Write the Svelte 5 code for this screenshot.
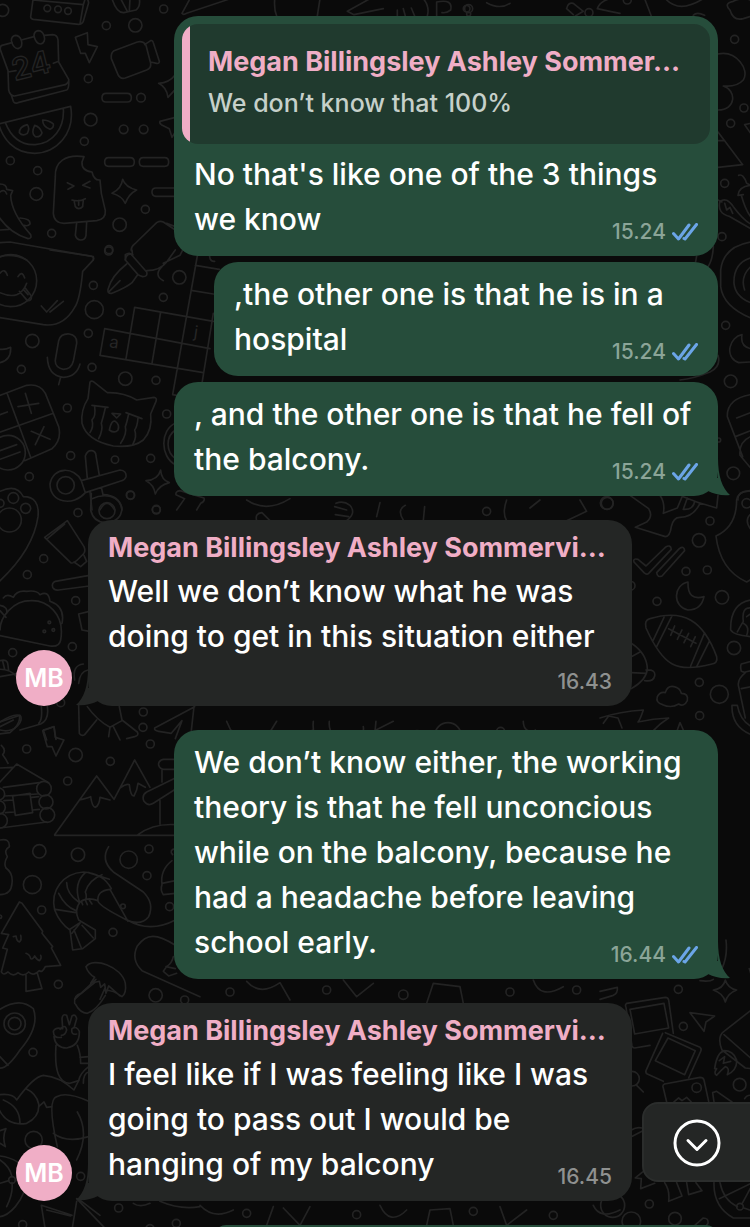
<script>
  const messages = [
    {
      mine: true,
      time: '15.24',
      quote: { name: 'Megan Billingsley Ashley Sommer…', text: 'We don’t know that 100%' },
      text: "No that's like one of the 3 things\nwe know",
    },
    { mine: true, narrow: true, time: '15.24', text: ',the other one is that he is in a\nhospital' },
    { mine: true, tail: true, time: '15.24', text: ', and the other one is that he fell of\nthe balcony.' },
    {
      author: 'Megan Billingsley Ashley Sommervi…',
      tail: true,
      stacked: true,
      time: '16.43',
      text: 'Well we don’t know what he was\ndoing to get in this situation either',
    },
    {
      mine: true,
      tail: true,
      time: '16.44',
      text: 'We don’t know either, the working\ntheory is that he fell unconcious\nwhile on the balcony, because he\nhad a headache before leaving\nschool early.',
    },
    {
      author: 'Megan Billingsley Ashley Sommervi…',
      tail: true,
      time: '16.45',
      text: 'I feel like if I was feeling like I was\ngoing to pass out I would be\nhanging of my balcony',
    },
  ];

  // Wallpaper doodles, drawn at three times their size and placed by region.
  const doodles = [
    {
      x: 0,
      y: 0,
      dots: [
        [8, 31, 18], [142, 25, 10], [174, 28, 10], [204, 33, 10], [319, 77, 12], [406, 76, 20], [491, 27, 12],
        [265, 236, 12], [423, 293, 13], [272, 359, 19], [371, 388, 13], [431, 388, 13], [253, 424, 12], [31, 482, 12],
        [113, 512, 12], [109, 582, 19], [436, 628, 12], [359, 674, 20], [155, 700, 12], [327, 749, 12],
      ],
      paths: [
        'M100 -8 92 50Q92 56 100 58L236 73Q246 73 250 64L266 8 262 -6M98 0 250 14 256 -5M250 14 240 72',
        'M336 -4Q350 40 372 38L408 30Q422 20 418 -4M362 -4 382 34M390 -4 388 32',
        'M6 136Q-2 140 2 152L24 212 26 270Q30 288 44 288L196 254Q208 248 206 238L176 186 174 120Q172 104 158 104L134 106M102 110 64 120M36 128 6 136M24 216 48 212M160 190 176 184M34 286 40 304Q44 312 54 308L200 270Q208 266 206 238',
        'M34 122Q34 108 46 106Q58 106 64 120Q70 142 54 146Q40 146 34 122ZM102 108Q102 94 114 92Q126 92 132 106Q138 128 122 132Q108 132 102 108Z',
        'M226 112 262 98 264 134 292 140 268 188 256 160 242 160Z',
        'M342 152 412 126Q430 122 438 136L452 190Q454 204 440 210L376 234Q360 238 354 224L334 176Q332 158 342 152ZM434 134 452 122Q458 120 460 128L478 184Q478 192 470 190L452 186',
        'M318 280H382Q394 280 394 293T382 306H318Q306 306 306 293T318 280ZM326 473H390Q403 473 403 486T390 499H326Q314 499 314 486T326 473ZM430 473H494Q506 473 506 486T494 499H430Q418 499 418 486T430 473ZM540 564H468Q456 564 456 576T468 589H540',
        'M-4 372 212 319C226 400 170 458 104 460C40 460 8 414 -4 372ZM16 368C34 414 64 436 106 434C160 430 194 384 190 324',
        'M82 374Q58 380 58 398Q68 410 82 400Q90 384 82 374ZM104 376Q92 400 106 410Q122 412 126 398Q120 380 104 376ZM128 360Q128 380 150 388Q162 384 160 372Q146 360 128 360Z',
        'M252 470C196 462 164 486 166 530L160 640Q162 670 192 670L290 662Q318 658 316 632L304 580 300 540Q282 542 276 516Q244 512 246 486Z',
        'M202 548 222 558 204 568M270 544 248 556 270 564M216 600Q238 606 256 596M222 602 226 620Q236 632 248 620L250 600M236 602V616M230 668 226 706Q230 720 242 720Q256 720 258 706L260 666',
        'M368 538Q376 562 410 570Q386 582 376 610Q366 588 336 580Q364 566 368 538Z',
        'M526 224Q508 248 476 250Q500 262 504 292L526 268M526 352 480 364Q478 370 484 374L508 386 516 412 526 396',
        'M0 552Q20 552 20 568L38 572 32 586Q34 640 92 704Q96 716 84 716Q30 700 -4 650M0 576Q14 566 20 582M60 654Q92 656 90 672Q84 680 72 676M0 690 28 688',
        'M-4 728 30 726 280 770V780M0 770Q40 760 80 780M394 752Q392 742 404 732L470 668Q480 662 490 666L526 690M376 780Q378 758 398 764M500 670 526 680',
      ],
      words: [{ text: '24', x: 44, y: 242, size: 92, rotate: -14 }],
    },
    {
      x: 0,
      y: 250,
      dots: [
        [32, 92, 78], [280, 106, 12], [283, 179, 27], [361, 187, 12], [265, 250, 12], [97, 273, 20], [538, 82, 20],
        [490, 142, 12], [276, 352, 12], [64, 358, 12], [376, 386, 20], [468, 391, 12], [202, 474, 12], [500, 492, 12],
        [212, 617, 12], [345, 629, 11], [452, 625, 12], [88, 680, 12], [392, 736, 12], [197, 706, 26], [24, 608, 52],
        [326, 3, 12],
      ],
      paths: [
        'M150 0 272 18Q288 22 276 34L248 64Q240 150 224 172Q190 232 130 224L-4 202M0 70Q14 52 22 76M54 80Q66 60 74 84M0 128Q60 154 80 100M58 124 82 152Q96 154 94 138L74 112M70 118 84 134M124 168 140 186 172 152M150 186 190 154',
        'M380 42Q334 78 324 118Q322 132 336 130Q380 112 396 98L412 76M328 124 360 92M376 14Q390 4 398 18L440 66Q444 80 428 80Q420 78 414 74L376 30ZM398 18 396 0M440 62Q480 62 500 36L526 0M486 50Q460 76 490 92M490 40 540 16 548 0',
        'M314 236 630 296M404 172 640 214M300 316 610 368M314 236 300 316M404 172 378 326M482 186 456 340M592 18 518 434M640 190 606 400M578 122 640 132M586 46 658 58M518 434 530 436',
        'M176 272Q182 250 208 252Q232 256 230 280L220 334Q214 358 190 358Q164 352 166 330ZM142 322Q144 378 190 382Q230 380 240 342M182 382 176 404M0 298Q16 300 32 292Q34 330 0 338',
        'M-4 438 80 406Q120 400 136 430L176 530Q186 570 156 596L74 632M22 432 92 622M-4 548 160 490M54 470 116 460M76 430 94 490M0 494 22 486M94 544 150 568M132 530 106 584M0 602 50 584M0 628 60 606',
        'M270 396Q276 390 284 398L322 428Q370 426 410 450L462 442Q472 444 468 454L452 492Q458 540 430 570Q400 594 340 588Q260 572 246 520Q242 480 264 446ZM276 466 324 472M378 488 426 506M284 470Q288 500 276 510Q282 530 270 548M316 474Q310 500 304 520Q310 540 296 566M386 492Q380 520 376 530Q382 550 362 580M414 504Q412 530 404 540Q412 560 398 584M336 490 362 492 350 504ZM328 540Q334 510 346 514Q360 524 354 540Q344 552 328 540Z',
        'M244 692C224 650 160 648 150 702C150 760 220 770 256 728ZM244 692 360 660Q380 662 378 680Q376 690 360 694L256 728M262 686 256 618Q262 600 276 602Q288 604 288 618L298 676M270 724 276 780M304 712 310 738M276 746C310 730 360 734 366 780M300 780Q320 740 344 780',
        'M482 660Q484 690 508 698Q476 706 466 732Q462 704 438 692Q474 690 482 660ZM526 520C480 540 480 620 526 644M526 540C496 560 498 606 526 626',
        'M530 780 554 746 528 734Q526 724 540 722L612 744Q616 754 602 760L590 780',
        'M630 0Q624 36 644 34',
      ],
      words: [
        { text: 'a', x: 326, y: 292, size: 50, rotate: 8, solid: true },
        { text: 'j', x: 580, y: 262, size: 50, rotate: 8, solid: true },
      ],
    },
    {
      x: 0,
      y: 480,
      dots: [
        [40, 54, 16], [77, 85, 15], [28, 120, 36], [391, 45, 12], [234, 98, 12], [469, 88, 12], [131, 236, 12],
        [82, 284, 12], [227, 362, 12], [217, 500, 12], [38, 518, 12], [321, 92, 24], [430, 696, 12], [148, 427, 4],
        [133, 454, 4], [160, 450, 4], [0, 70, 12],
      ],
      paths: [
        'M0 34Q50 10 70 50Q120 50 114 110Q100 210 -4 306',
        'M274 40 272 90Q280 126 316 128Q364 126 366 84Q356 46 310 44',
        'M202 122 134 172 212 248Q220 252 232 240L250 222Q258 214 252 200ZM194 132 142 176M222 246 242 260 260 244 252 226',
        'M268 286 166 304Q154 310 158 322Q164 332 176 330L268 318M268 394 236 402 246 450 268 454',
        'M-4 466 150 498Q178 502 182 480C196 400 140 360 92 362C40 362 0 410 0 450M10 354Q20 340 40 352Q50 330 80 334Q110 330 120 344Q146 330 150 364Q196 380 186 430M0 376Q24 380 20 400M0 392 18 412',
        'M0 542Q24 536 24 556L26 572M-4 568Q30 566 50 590M8 544 14 568M0 590 56 580M0 726 60 706Q70 720 50 740Q30 758 0 750',
        'M224 600Q216 556 250 552M236 610Q240 574 264 570M236 676 238 760Q244 770 254 764L290 720M262 680Q290 720 330 742L326 770M358 680 366 720 412 756Q418 766 404 770L380 776M330 742 366 722M340 740 360 780M584 680 464 744Q462 752 476 754L514 760 546 722 526 776M572 770 582 680M130 750 162 740 168 778M130 750 140 780',
      ],
    },
    {
      x: 0,
      y: 700,
      dots: [
        [182, 8, 12], [80, 147, 12], [227, 165, 20], [451, 132, 12], [331, 184, 12], [203, 243, 12], [118, 454, 20],
        [234, 464, 20], [386, 479, 26], [447, 447, 12], [441, 527, 12], [97, 554, 27], [125, 630, 12], [509, 620, 12],
        [339, 697, 12], [175, 853, 12], [467, 886, 20], [369, 619, 7], [132, 266, 22], [138, 306, 21], [142, 345, 22],
        [0, 362, 22], [-4, 322, 20], [-4, 282, 18], [0, 650, 5], [554, 900, 12],
      ],
      paths: [
        'M0 66Q40 40 58 46Q64 70 30 98L-4 102M0 80 40 60M142 20Q148 60 122 72L60 90M124 20Q128 60 116 70',
        'M128 92 162 80 166 112 192 120 168 168 156 140 142 140Z',
        'M4 136Q20 150 8 164Q20 180 24 190M0 246 50 192 146 248M0 204 38 202M10 262 118 248M14 288 112 282M12 302 38 300M16 338 42 336M96 292 116 290M98 330 118 328M0 384 140 366M38 288 90 280 98 338 46 346Z',
        'M164 404 290 228 342 298 404 180 450 262M164 406H526M238 300Q262 294 272 290Q276 320 286 322Q298 316 300 292L330 300M360 264Q380 250 388 254Q392 290 402 288Q412 270 414 250L436 262M414 404Q460 370 526 374M526 178H490Q474 182 476 196Q480 208 492 208H526M486 210V246M526 234 440 276Q424 286 432 304Q444 320 460 310L526 268M480 302V372',
        'M0 420Q30 414 28 440Q10 450 22 470Q10 490 18 504Q40 520 36 550Q34 584 0 584',
        'M326 440Q300 480 340 516L430 576Q464 610 446 650Q424 678 380 660Q300 620 294 604Q290 572 330 568L384 664M382 660Q450 700 526 660M334 566Q310 520 250 516C190 520 150 570 164 630Q180 670 210 690L218 750 248 746 286 716 286 690 236 660Q222 630 240 606Q262 590 294 602M266 518 328 538M306 524Q266 540 256 576Q262 590 256 600M256 518Q220 550 238 604M200 548Q200 580 236 606M176 580Q196 620 228 632M166 628 228 638M210 688 240 668M240 670 216 700M246 676 280 714M222 690 244 744M244 604 248 614M256 600 262 614M268 600 276 612',
        'M58 606 4 700 26 704 8 744 22 748 4 816Q10 828 24 816Q40 832 54 818Q70 832 86 816Q100 830 118 812Q126 820 136 800L182 796 154 744 158 740 126 700 128 694 66 610ZM40 710 48 708Q50 724 58 726Q66 720 62 706M78 760Q90 764 92 776Q98 780 104 768Q110 780 118 782Q126 776 122 766M78 826V874L126 866 112 820',
        'M258 800C280 770 366 800 376 850Q380 880 366 890Q340 870 314 870M258 800Q264 820 284 832L272 850 298 844 302 862 314 852 318 880 326 858 360 888M288 838 224 898M316 862 300 898M526 736C470 700 440 700 412 738Q392 780 426 812L600 890M520 770Q516 790 500 800L490 814 506 828 530 820M498 800 526 806M516 482Q480 510 486 554Q480 570 490 584L526 580M486 550 526 542M526 446Q506 450 518 464',
      ],
    },
    {
      x: 0,
      y: 960,
      dots: [
        [44, 191, 32], [44, 191, 19], [99, 277, 12], [101, 540, 26], [242, 649, 12], [356, 744, 12], [68, 794, 12],
        [529, 790, 12], [450, 806, 12], [36, 660, 10],
      ],
      paths: [
        'M0 148Q60 110 100 146Q120 200 60 270Q20 330 -4 324M0 290 24 316',
        'M224 130Q220 106 244 100L284 68M226 132Q240 160 262 160Q290 150 316 106',
        'M188 204 186 176Q188 160 200 166L208 194 216 168Q226 160 230 176L222 204M188 206Q166 200 160 214Q160 236 184 232M180 208Q196 190 200 210Q196 226 184 226M162 230Q166 264 200 264Q240 256 238 214Q230 196 216 206Q212 226 230 222M168 256Q160 370 210 370M232 256Q242 280 242 310L266 310M240 292 266 290M210 370 236 362Q240 340 266 320M250 370Q250 340 266 336',
        'M0 404Q40 400 50 420 100 350 130 346 180 350 222 390L236 362M78 386Q110 400 116 432Q120 470 80 490 20 500 -4 446M10 420Q60 440 60 490M116 440 132 426 140 442 156 440M172 560Q140 420 170 410Q200 394 266 424M160 520Q200 550 266 530M232 456Q270 520 230 600M0 512 18 506Q6 530 16 560L0 550M0 588Q60 596 84 640Q80 700 46 740Q20 770 -4 770M0 600Q30 620 36 650M36 668Q40 700 20 740M0 670 26 662M46 662 84 650',
        'M124 736 136 810M124 736 216 766M140 750 212 768M230 724 216 810M234 716 300 766M230 716 320 810M400 730Q420 744 450 730M480 724Q540 750 600 740',
      ],
    },
    {
      x: 600,
      y: 480,
      dots: [
        [20, 69, 19], [330, 123, 12], [297, 181, 20], [258, 274, 12], [322, 270, 12], [366, 352, 20], [171, 364, 12],
        [402, 504, 20], [298, 607, 12], [358, 643, 27], [299, 707, 12], [440, 70, 14], [92, 317, 13],
      ],
      paths: [
        'M90 46 146 86Q160 110 140 126L106 142 196 170Q210 170 214 140Q220 112 240 112Q280 112 300 70L250 50M180 46Q196 70 190 100L232 84 248 46M250 88 262 54M250 88Q280 90 284 64M354 46 350 84 290 66',
        'M102 246Q98 234 114 238L138 258 196 202Q212 192 214 208L146 280Q140 286 132 278ZM170 278 238 206Q252 196 254 212L186 288Q172 294 170 278Z',
        'M264 306C220 314 216 380 264 390Q304 390 312 350Q262 364 264 306Z',
        'M138 444Q132 420 150 416C250 386 310 420 350 530Q354 550 336 552C230 580 190 560 138 444ZM192 412 158 484M216 408 170 500M314 458 272 558M328 484 290 560M206 446 288 490M224 438 212 466M246 450 232 478M266 460 252 488M286 470 272 500',
        'M188 674Q166 668 172 650Q180 634 196 638Q202 616 222 620Q240 624 244 640Q266 640 262 662Q252 682 236 672Q214 686 188 674Z',
        'M454 34Q416 30 410 60Q410 140 348 168Q360 270 440 306L454 298M454 100Q430 120 454 150M454 360Q390 370 392 450Q400 466 454 470M454 384Q424 380 430 424Q420 440 412 456M430 430Q450 440 440 466M454 400 440 410M454 544 424 552Q420 560 424 574L436 578Q410 600 416 620L436 714M424 626 454 620M436 576 454 572M396 676 412 676Q420 720 454 740M396 676Q394 740 454 764M94 490Q140 520 142 566Q140 600 94 626M94 530 120 516M94 578 138 580M138 570Q168 568 164 588Q160 606 134 602',
        'M0 714Q60 694 130 690Q120 720 114 726Q160 716 206 714Q180 730 160 752M10 730 26 708 54 714 66 744M232 750 240 728 250 750',
      ],
    },
    {
      x: 600,
      y: 940,
      dots: [
        [235, 148, 12], [250, 259, 12], [290, 443, 14], [419, 434, 19], [148, 792, 12], [225, 836, 19], [38, 796, 36],
        [94, 844, 28], [96, 416, 22], [420, 800, 10],
      ],
      paths: [
        'M376 120Q384 146 410 150Q382 160 376 186Q370 160 340 150Q370 146 376 120ZM0 154 52 142Q54 160 40 166L0 178',
        'M80 190 196 172Q204 172 206 180L220 280M80 190Q74 194 78 202L96 318Q98 324 104 324L150 316M90 208 192 190 206 264 104 282Z',
        'M196 278 300 322Q306 326 302 334L266 414M188 280 138 392Q136 398 142 402L190 424M204 294 286 332 254 404 166 362Z',
        'M270 218 344 228 318 246 312 274ZM194 432 300 412Q310 412 312 420L326 484M194 432Q186 436 190 444L200 486M222 486 236 474 246 482 260 472 274 486M342 486 338 458 350 454 396 486',
        'M454 210 372 274Q350 290 366 330L436 384 454 386M372 284 454 356M344 386Q350 340 372 332Q400 332 410 360Q412 390 382 404Q390 384 376 380Q364 390 350 406Q340 400 350 386ZM358 362 374 350 370 370 392 364M434 476Q440 464 454 466',
        'M110 436 130 456M94 570Q110 560 126 564M94 590 126 574M130 694 106 714 124 716 122 746 164 730M194 728Q210 750 206 784L246 768 230 728M260 728 266 764 306 752 288 728M342 728Q340 800 400 834L454 834M360 728Q370 780 412 800M358 776 454 730M426 792 454 740M432 804 454 812M280 860 310 834Q326 834 324 850L316 862M378 0Q384 50 364 90M448 86 454 106M300 122Q330 126 340 118',
      ],
    },
    {
      x: 680,
      y: 120,
      dots: [[152, 10, 12], [134, 190, 12], [126, 350, 12], [137, 616, 12], [152, 784, 19], [160, 1060, 19], [116, 960, 6]],
      paths: [
        'M114 36 188 134 114 142M114 62 134 62M194 14 212 40M194 14 212 10',
        'M176 166Q190 160 200 190L212 196M212 196Q176 200 174 226L190 224M120 244Q110 280 150 290L212 326M120 244Q140 230 160 260Q190 300 212 312M134 250 140 270 150 262 158 280M114 240 126 246M184 226Q196 270 212 290',
        'M212 366Q130 380 122 450L122 500Q130 560 212 594M212 414Q160 430 162 490Q166 530 212 548M212 440Q180 470 194 510',
        'M186 644C150 650 130 710 176 728L212 726M186 644Q180 680 212 686M212 824Q140 836 142 890L188 1010M170 894 212 878M166 950 212 932M212 950Q176 966 180 1006L212 1044M212 1112Q170 1116 174 1140',
        'M100 380Q98 420 84 440M50 408 46 430M114 706Q124 740 90 756Q40 776 0 780',
      ],
    },
    {
      x: 170,
      y: 0,
      dots: [[890, 26, 10], [1257, 38, 12], [896, 26, 12], [896, 42, 6], [1372, 0, 12], [1694, 118, 12], [1722, 324, 12]],
      paths: [
        'M36 40 60 -4M36 40Q40 46 50 40L176 -2M314 0Q312 30 320 48M450 -4 442 48M532 34 600 -4M532 34 552 44 640 26M682 30V48M700 26 706 48M724 24 734 48M760 -4Q780 20 772 48M800 50V6Q850 -4 842 30Q830 40 816 38',
        'M950 8Q990 30 1020 10M1190 26Q1194 6 1210 10L1240 34 1216 48M1190 26 1210 44M1282 26Q1290 4 1320 -4M1282 26 1320 34 1350 40M1424 -4 1444 48M1490 0Q1530 40 1600 -4M1570 46Q1580 34 1604 46',
        'M1680 30Q1660 10 1690 4Q1720 -10 1740 0M1680 30Q1690 64 1720 56L1740 50M1644 162C1700 150 1740 210 1720 240Q1700 262 1660 258C1700 270 1700 330 1644 330',
      ],
    },
    {
      x: 80,
      y: 500,
      dots: [
        [229, 30, 12], [1220, 34, 12], [1582, 10, 18], [189, 682, 12], [400, 718, 12], [1262, 694, 12], [1466, 712, 12],
        [1104, 708, 40], [1012, 726, 34],
      ],
      paths: [
        'M500 0Q560 40 630 -4M530 62Q524 40 546 38L570 62M768 10Q790 0 810 16Q830 40 800 62M764 20 800 30M766 44 806 50M900 8 890 50 M976 16Q950 30 970 60M1034 20 1030 62M1280 0Q1266 40 1280 62M1350 24 1380 0M1500 0 1520 34 1460 62',
        'M440 664 452 690 480 704 570 696 590 664M640 712 700 690 702 732ZM700 664Q696 712 720 736M888 664Q886 712 866 736M748 664C740 740 860 740 850 680M888 690 940 664M1330 664Q1330 700 1370 694L1396 706M1366 690 1388 712M1520 732Q1580 680 1640 700',
      ],
    },
    {
      x: 200,
      y: 980,
      dots: [[90, 36, 12], [380, 30, 12], [610, 44, 14], [930, 36, 12], [1130, 30, 12], [140, 700, 12], [470, 704, 12], [820, 694, 12], [1060, 706, 12]],
      paths: [
        'M140 4Q180 50 240 8L270 60M430 0 470 50 520 10M680 70 700 10 780 20 790 70M1000 0Q1020 60 1090 20',
        'M0 676Q40 720 100 690M220 680 200 736M250 684 300 736 330 680M540 676Q570 740 620 690M680 736 690 690 750 686 760 736M900 680 920 736 980 690M1180 676Q1200 720 1260 690',
      ],
    },
  ];
</script>

<main class="chat">
  <svg class="wallpaper" viewBox="0 0 750 1227" preserveAspectRatio="xMidYMid slice" aria-hidden="true">
    {#each doodles as region}
      <g transform="translate({region.x} {region.y}) scale(0.3333)">
        {#each region.paths as d}<path {d} />{/each}
        {#each region.dots as [cx, cy, r]}<circle {cx} {cy} {r} />{/each}
        {#each region.words ?? [] as word}
          <text
            class:solid={word.solid}
            transform="translate({word.x} {word.y}) rotate({word.rotate})"
            font-size={word.size}>{word.text}</text
          >
        {/each}
      </g>
    {/each}
  </svg>

  <ol class="thread">
    {#each messages as message}
      <li class="row" class:mine={message.mine} class:last={message.tail}>
        {#if !message.mine}<span class="avatar">MB</span>{/if}
        <article class="bubble" class:narrow={message.narrow}>
          {#if message.quote}
            <blockquote>
              <strong class="author">{message.quote.name}</strong>
              <p>{message.quote.text}</p>
            </blockquote>
          {/if}
          {#if message.author}<strong class="author">{message.author}</strong>{/if}
          <div class="text">{message.text}<span class="meta" class:stacked={message.stacked}>
              <time>{message.time}</time>
              {#if message.mine}
                <svg class="ticks" viewBox="0 0 26 18" role="img" aria-label="Read">
                  <path d="M1.5 10.5 6.5 16 17 2M12 15.5 13 16 24.5 1.5" />
                </svg>
              {/if}
            </span></div>
          {#if message.tail}
            <svg class="tail" viewBox="0 0 22 38" aria-hidden="true">
              <path d="M0 20H10V0C10 18 14 30 22 37C14 38 6 36 0 33Z" />
            </svg>
          {/if}
        </article>
      </li>
    {/each}
    <li class="row mine"><div class="bubble narrow"></div></li>
  </ol>

  <button class="jump" aria-label="Scroll to latest">
    <svg viewBox="0 0 48 48" aria-hidden="true">
      <circle cx="24" cy="24" r="22" />
      <path d="M15 21.5 24 30.5 33 21.5" />
    </svg>
  </button>
</main>

<style>
  :global(body) {
    margin: 0;
    background: #0a0a0a;
  }

  .chat {
    position: relative;
    height: 100vh;
    overflow: hidden;
    background: #0a0a0a;
    color: #fff;
    font-family: Inter, 'Noto Sans', sans-serif;
    font-weight: 500;
  }

  .wallpaper {
    position: absolute;
    inset: 0;
    width: 100%;
    height: 100%;
    fill: none;
    stroke: #232323;
    stroke-width: 5;
    stroke-linecap: round;
    stroke-linejoin: round;
  }

  .wallpaper text {
    stroke-width: 4;
    font-weight: 600;
  }

  .wallpaper .solid {
    fill: #262626;
    stroke: none;
    font-weight: 400;
  }

  .thread {
    position: relative;
    display: flex;
    flex-direction: column;
    gap: 6px;
    margin: 0;
    padding: 16px 32px 0 16px;
    list-style: none;
  }

  .row {
    display: flex;
    align-items: flex-end;
    gap: 16px;
  }

  .row.mine {
    justify-content: flex-end;
  }

  .row.last {
    margin-bottom: 18px;
  }

  .avatar {
    display: grid;
    flex: none;
    place-items: center;
    width: 56px;
    height: 56px;
    border-radius: 50%;
    background: #f0aec6;
    font-size: 25px;
    font-weight: 600;
  }

  .bubble {
    position: relative;
    box-sizing: border-box;
    width: 100%;
    max-width: 544px;
    padding: 10px 20px 14px;
    border-radius: 24px;
    background: #242625;
  }

  .mine .bubble {
    background: #264d3b;
  }

  .bubble.narrow {
    max-width: 504px;
  }

  blockquote {
    margin: -2px -12px 8px;
    padding: 20px 18px 20px 26px;
    border-radius: 16px;
    background: linear-gradient(to right, #f0aec6 8px, #203a2e 8px);
  }

  blockquote p {
    margin: 0;
    color: #c6d0ca;
    font-size: 25px;
    line-height: 41px;
  }

  .author {
    display: block;
    margin-bottom: 3px;
    overflow: hidden;
    color: #f0aec6;
    font-size: 27px;
    font-weight: 700;
    line-height: 36px;
    white-space: nowrap;
  }

  .text {
    display: flow-root;
    font-size: 30px;
    line-height: 45px;
    white-space: pre-line;
  }

  .meta {
    display: flex;
    float: right;
    align-items: center;
    gap: 6px;
    margin-top: 25px;
    color: #8f9190;
    font-size: 21px;
    line-height: 20px;
    white-space: normal;
  }

  .meta.stacked {
    margin-top: 13px;
  }

  .mine .meta {
    color: #8ba598;
  }

  .ticks {
    width: 26px;
    height: 18px;
    fill: none;
    stroke: #6ba5e7;
    stroke-width: 3;
    stroke-linecap: round;
    stroke-linejoin: round;
  }

  .tail {
    position: absolute;
    right: -12px;
    bottom: 0;
    width: 22px;
    height: 38px;
    fill: #264d3b;
  }

  .row:not(.mine) .tail {
    right: auto;
    left: -12px;
    fill: #242625;
    transform: scaleX(-1);
  }

  .jump {
    position: absolute;
    right: -2px;
    bottom: 45px;
    display: grid;
    place-items: center;
    width: 110px;
    height: 80px;
    padding: 2px 0 0;
    border: 2px solid #2b2d2c;
    border-radius: 16px 0 0 16px;
    background: #242625;
  }

  .jump svg {
    width: 48px;
    height: 48px;
    fill: none;
    stroke: #fff;
    stroke-width: 3;
    stroke-linecap: round;
    stroke-linejoin: round;
  }
</style>
